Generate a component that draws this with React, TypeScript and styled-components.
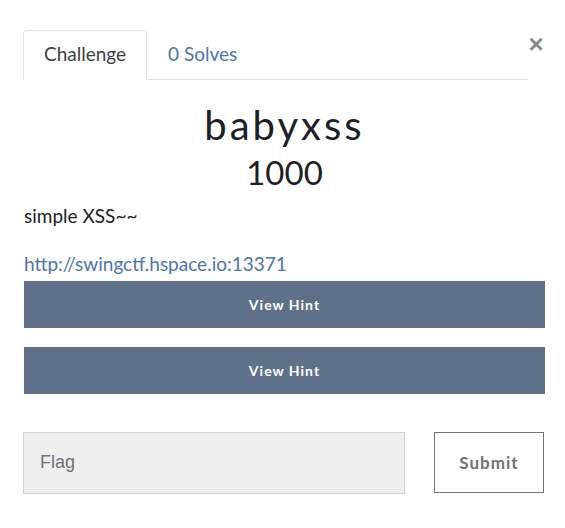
import styled, { createGlobalStyle } from "styled-components"

const GlobalStyle = createGlobalStyle`
    body {
        margin: 0;
        background: #fff;
        font-family: Lato, "Open Sans", sans-serif;
        color: #212529;
    }
`

const App = () => {
    return (
        <>
            <GlobalStyle />
            <Modal>
                <Header>
                    <Tabs>
                        <Tab active>Challenge</Tab>
                        <Tab>0 Solves</Tab>
                    </Tabs>
                    <Close aria-label="Close">×</Close>
                </Header>
                <Title>babyxss</Title>
                <Value>1000</Value>
                <Description>simple XSS~~</Description>
                <Link href="#">http://swingctf.hspace.io:13371</Link>
                <Hints>
                    <HintButton>View Hint</HintButton>
                    <HintButton>View Hint</HintButton>
                </Hints>
                <SubmitRow>
                    <FlagInput placeholder="Flag" />
                    <SubmitButton>Submit</SubmitButton>
                </SubmitRow>
            </Modal>
        </>
    )
}

export default App

const Modal = styled.div`
    width: 521px;
    padding: 30px 20px 0 24px;
`

const Header = styled.div`
    display: flex;
    align-items: flex-start;
`

const Tabs = styled.div`
    flex: 1;
    display: flex;
    border-bottom: 1px solid #e2e5e8;
    margin-left: -1px;
`

const Tab = styled.div<{ active?: boolean }>`
    height: 50px;
    padding: 0 20px 3px;
    box-sizing: border-box;
    display: flex;
    align-items: center;
    font-size: 19px;
    color: ${(p) => (p.active ? "#3d4147" : "#4a74b4")};
    border: 1px solid ${(p) => (p.active ? "#e2e5e8" : "transparent")};
    border-bottom-color: ${(p) => (p.active ? "#fff" : "transparent")};
    border-radius: 4px 4px 0 0;
    margin-bottom: -1px;
    background: ${(p) => (p.active ? "#fff" : "transparent")};
`

const Close = styled.button`
    border: 0;
    background: none;
    padding: 0;
    margin: 1px 1px 0 0;
    width: 16px;
    font-family: "Liberation Sans", Arial, sans-serif;
    font-size: 26px;
    font-weight: 700;
    line-height: 1;
    color: #888;
`

const Title = styled.h1`
    margin: 21px 0 0;
    text-align: center;
    font-family: Lato, sans-serif;
    font-weight: 400;
    font-size: 40px;
    letter-spacing: 3px;
    line-height: 1.2;
    color: #1d2024;
`

const Value = styled.h3`
    margin: 4px 0 0;
    text-align: center;
    font-weight: 400;
    font-size: 33px;
    line-height: 1.2;
    color: #1d2024;
`

const Description = styled.p`
    margin: 9px 0 0;
    font-size: 19px;
    line-height: 1.5;
    color: #1d2024;
`

const Link = styled.a`
    display: block;
    margin-top: 20px;
    font-size: 19px;
    line-height: 1.5;
    color: #4a74b4;
    text-decoration: none;
`

const Hints = styled.div`
    display: flex;
    flex-direction: column;
    gap: 19px;
    margin-top: 2px;
`

const HintButton = styled.button`
    height: 47px;
    width: 100%;
    border: 0;
    background: #5f708a;
    color: #fff;
    font-family: Lato, sans-serif;
    font-size: 14px;
    font-weight: 700;
    letter-spacing: 1px;
`

const SubmitRow = styled.div`
    display: grid;
    grid-template-columns: 382px 110px;
    justify-content: space-between;
    align-items: start;
    margin-top: 38px;
    margin-left: -1px;
    width: 521px;
`

const FlagInput = styled.input`
    box-sizing: border-box;
    height: 62px;
    width: 100%;
    padding: 0 16px;
    background: #efefef;
    border: 1px solid #cfd4d8;
    font-family: "Liberation Sans", Arial, sans-serif;
    font-size: 18px;
    color: #495057;
    outline: none;

    &::placeholder {
        color: #6c737a;
    }
`

const SubmitButton = styled.button`
    box-sizing: border-box;
    height: 61px;
    border: 1px solid #6c737a;
    background: #fff;
    color: #6c737a;
    font-family: Lato, sans-serif;
    font-size: 17px;
    font-weight: 700;
    letter-spacing: 1px;
`
